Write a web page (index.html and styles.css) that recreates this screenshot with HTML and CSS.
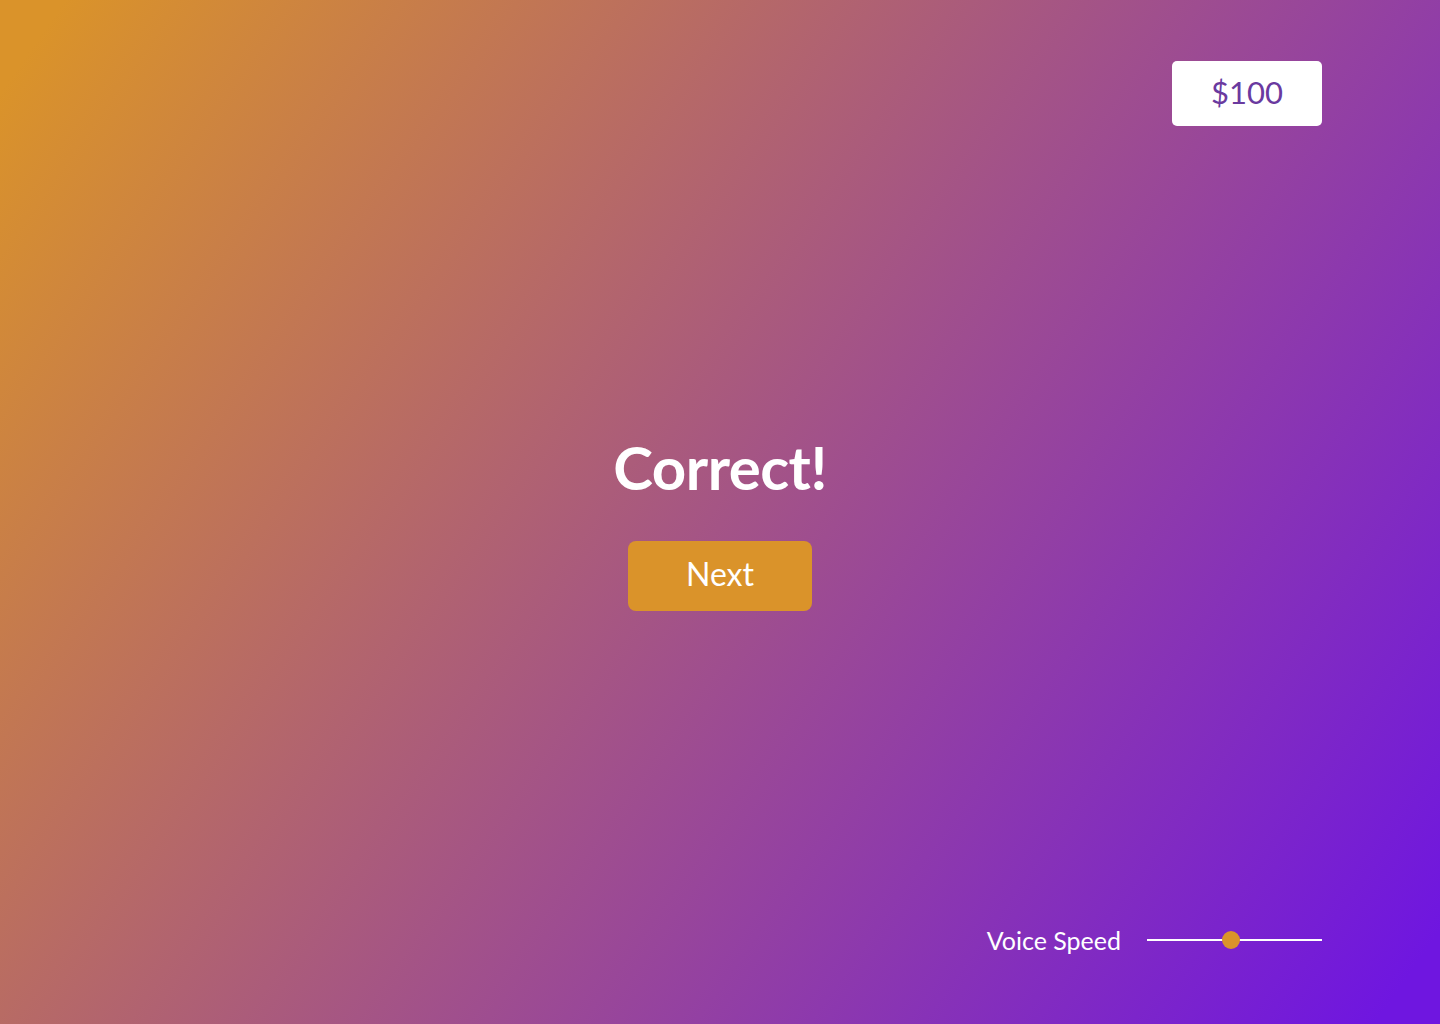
FILE: index.html
```html
<!DOCTYPE html>
<html lang="en">
<head>
<meta charset="utf-8">
<title>Correct!</title>
<link rel="stylesheet" href="styles.css">
</head>
<body>
<div class="page">
  <header class="top">
    <div class="score">$100</div>
  </header>
  <main class="center">
    <h1 class="title">Correct!</h1>
    <button class="next">Next</button>
  </main>
  <footer class="bottom">
    <label class="speed-label" for="speed">Voice Speed</label>
    <div class="slider">
      <div class="track"></div>
      <div class="thumb"></div>
    </div>
  </footer>
</div>
</body>
</html>
```
FILE: styles.css
```css
* { box-sizing: border-box; }
html, body { margin: 0; padding: 0; }
body {
  width: 1440px;
  height: 1024px;
  overflow: hidden;
  font-family: Lato, "Open Sans", sans-serif;
  background: linear-gradient(125deg, #da932a 3%, #6f16e0 97%);
  color: #fff;
}
.page {
  height: 1024px;
  display: flex;
  flex-direction: column;
  padding: 61px 118px 69px 118px;
}
.top {
  display: flex;
  justify-content: flex-end;
}
.score {
  width: 150px;
  height: 65px;
  background: #fff;
  border-radius: 5px;
  color: #6a3a9f;
  font-size: 31px;
  padding-bottom: 3px;
  display: flex;
  align-items: center;
  justify-content: center;
}
.center {
  flex: 1;
  display: flex;
  flex-direction: column;
  align-items: center;
  justify-content: center;
  padding-bottom: 4px;
}
.title {
  margin: 0;
  font-size: 60px;
  font-weight: 700;
  line-height: 1;
  letter-spacing: -0.5px;
}
.next {
  margin-top: 44px;
  width: 184px;
  height: 70px;
  border: none;
  border-radius: 8px;
  background: #da932a;
  color: #fff;
  font-family: inherit;
  font-size: 32px;
  padding: 0 0 4px;
}
.bottom {
  display: flex;
  justify-content: flex-end;
  align-items: center;
  gap: 26px;
}
.speed-label {
  font-size: 25px;
}
.slider {
  position: relative;
  width: 175px;
  height: 20px;
}
.track {
  position: absolute;
  left: 0; right: 0;
  top: 9px;
  height: 2px;
  background: #fff;
}
.thumb {
  position: absolute;
  left: 75px;
  top: 1px;
  width: 18px;
  height: 18px;
  border-radius: 50%;
  background: #da932a;
}
```
